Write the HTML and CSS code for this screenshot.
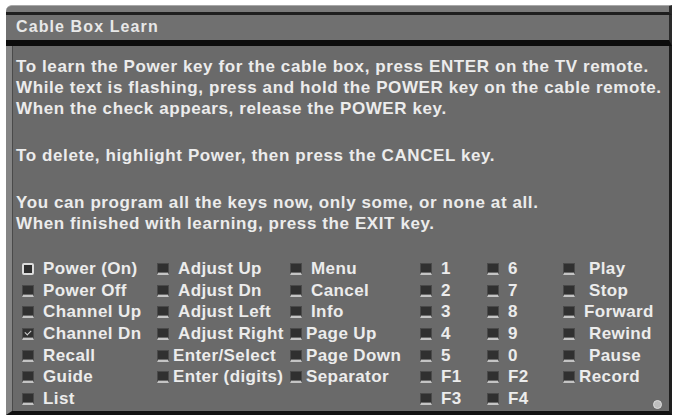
FILE: index.html
```html
<!DOCTYPE html>
<html lang="en">
<head>
  <meta charset="UTF-8">
  <title>Cable Box Learn</title>
  <link rel="stylesheet" href="styles.css">
</head>
<body>
  <div class="screen">
    <div class="frame-top"></div>
    <div class="titlebar">Cable Box Learn</div>

    <div class="panel">
      <p>To learn the Power key for the cable box, press ENTER on the TV remote.<br>
      While text is flashing, press and hold the POWER key on the cable remote.<br>
      When the check appears, release the POWER key.</p>

      <p>To delete, highlight Power, then press the CANCEL key.</p>

      <p>You can program all the keys now, only some, or none at all.<br>
      When finished with learning, press the EXIT key.</p>

      <div class="keys">
        <div class="key"><span class="box selected"></span>Power (On)</div>
        <div class="key"><span class="box"></span>Power Off</div>
        <div class="key"><span class="box"></span>Channel Up</div>
        <div class="key"><span class="box checked"></span>Channel Dn</div>
        <div class="key"><span class="box"></span>Recall</div>
        <div class="key"><span class="box"></span>Guide</div>
        <div class="key"><span class="box"></span>List</div>

        <div class="key"><span class="box"></span>Adjust Up</div>
        <div class="key"><span class="box"></span>Adjust Dn</div>
        <div class="key"><span class="box"></span>Adjust Left</div>
        <div class="key"><span class="box"></span>Adjust Right</div>
        <div class="key tight"><span class="box"></span>Enter/Select</div>
        <div class="key tight"><span class="box"></span>Enter (digits)</div>
        <div class="key empty"></div>

        <div class="key"><span class="box"></span>Menu</div>
        <div class="key"><span class="box"></span>Cancel</div>
        <div class="key"><span class="box"></span>Info</div>
        <div class="key tight"><span class="box"></span>Page Up</div>
        <div class="key tight"><span class="box"></span>Page Down</div>
        <div class="key tight"><span class="box"></span>Separator</div>
        <div class="key empty"></div>

        <div class="key"><span class="box"></span>1</div>
        <div class="key"><span class="box"></span>2</div>
        <div class="key"><span class="box"></span>3</div>
        <div class="key"><span class="box"></span>4</div>
        <div class="key"><span class="box"></span>5</div>
        <div class="key"><span class="box"></span>F1</div>
        <div class="key"><span class="box"></span>F3</div>

        <div class="key"><span class="box"></span>6</div>
        <div class="key"><span class="box"></span>7</div>
        <div class="key"><span class="box"></span>8</div>
        <div class="key"><span class="box"></span>9</div>
        <div class="key"><span class="box"></span>0</div>
        <div class="key"><span class="box"></span>F2</div>
        <div class="key"><span class="box"></span>F4</div>

        <div class="key wide"><span class="box"></span>Play</div>
        <div class="key wide"><span class="box"></span>Stop</div>
        <div class="key"><span class="box"></span>Forward</div>
        <div class="key wide"><span class="box"></span>Rewind</div>
        <div class="key wide"><span class="box"></span>Pause</div>
        <div class="key tight"><span class="box"></span>Record</div>
        <div class="key empty"></div>
      </div>

      <span class="corner-dot"></span>
    </div>
  </div>
</body>
</html>
```

FILE: styles.css
```css
* {
  margin: 0;
  padding: 0;
  box-sizing: border-box;
}

body {
  background: #ffffff;
  font-family: 'Liberation Sans', Arial, sans-serif;
  font-weight: bold;
  color: #ececec;
}

.screen {
  margin: 5px 4px 0 6px;
  display: flex;
  flex-direction: column;
}

.frame-top {
  height: 10px;
  background: #7a7a7a;
  border-top: 1px solid #a8a8a8;
  border-bottom: 3px solid #1e1e1e;
  border-top-left-radius: 6px;
  border-right: 3px solid #2a2a2a;
}

.titlebar {
  height: 31px;
  padding: 3px 0 0 10px;
  background: #707070;
  border-right: 3px solid #2a2a2a;
  border-bottom: 6px solid #0c0c0c;
  font-size: 16px;
  letter-spacing: 1.1px;
  color: #e8e8e8;
}

.panel {
  position: relative;
  height: 369px;
  padding: 10px 0 0 4px;
  background: #6a6a6a;
  border-left: 6px solid #858585;
  border-right: 3px solid #1e1e1e;
  border-bottom: 4px solid #111111;
  box-shadow: inset 1px 0 0 #4a4a4a;
}

.panel p {
  font-size: 17px;
  letter-spacing: 0.6px;
  line-height: 21px;
  margin-bottom: 26px;
}

.keys {
  display: grid;
  grid-template-columns: 135px 133px 130px 67px 76px 1fr;
  grid-template-rows: repeat(7, 21.7px);
  grid-auto-flow: column;
  margin-top: -2px;
  padding-left: 6px;
  font-size: 17px;
  letter-spacing: 0.4px;
}

.key {
  display: flex;
  align-items: center;
  gap: 9px;
  white-space: nowrap;
}

.key.tight {
  gap: 4px;
}

.key.wide {
  gap: 14px;
}

.box {
  position: relative;
  flex: none;
  width: 12px;
  height: 12px;
  background: #303030;
  border: 1px solid #4a4a4a;
  border-bottom: 2px solid #c4c4c4;
  box-shadow: inset 0 -1px 0 #6a6a6a;
}

.box.selected {
  border: 2px solid #dcdcdc;
  border-radius: 2px;
  box-shadow: none;
  background: #2e2e2e;
}

.box.checked::after {
  content: "";
  position: absolute;
  left: 2px;
  top: 1px;
  width: 5px;
  height: 3px;
  border-left: 1px solid #cfcfcf;
  border-bottom: 1px solid #cfcfcf;
  transform: rotate(-45deg);
}

.corner-dot {
  position: absolute;
  right: 7px;
  bottom: 2px;
  width: 9px;
  height: 9px;
  border-radius: 50%;
  background: #bdbdbd;
  border: 1px solid #dddddd;
}
```
